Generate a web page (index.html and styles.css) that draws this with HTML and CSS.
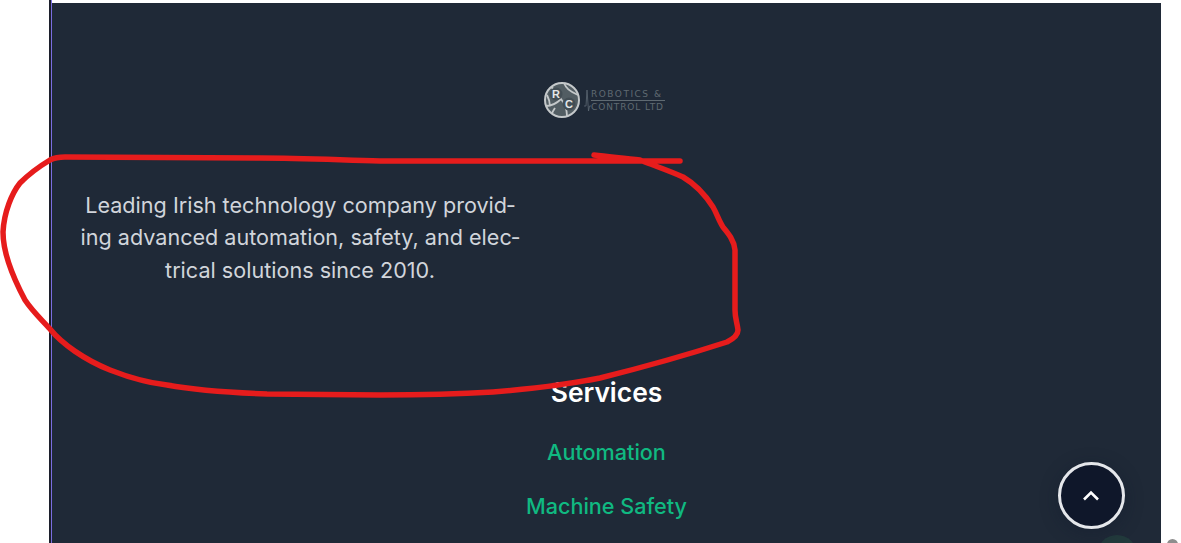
FILE: index.html
```html
<!DOCTYPE html>
<html lang="en">
  <head>
    <meta charset="UTF-8" />
    <meta name="viewport" content="width=device-width, initial-scale=1.0" />
    <title>Robotics &amp; Control Ltd</title>
    <link rel="stylesheet" href="styles.css">
  </head>
  <body>
    <div class="page">
      <footer class="footer">
        <!-- Logo -->
        <div class="logo">
          <svg class="logo-mark" width="38" height="38" viewBox="0 0 38 38">
            <circle cx="19" cy="19" r="17" fill="#525d63" stroke="#c4c8ca" stroke-width="2" />
            <path d="M3 25 C10 25 14 22 18 18 C22 23 24 28 24 35 M21 2 C23 7 26 10 35 14 M8 6 C10 8 12 9 14 9 M12 27 C10 30 9 32 9 33 M4 14 C6 18 7 21 7 25" fill="none" stroke="#c4c8ca" stroke-width="1.800" />
            <circle cx="13" cy="13" r="6.500" fill="#434e55" />
            <circle cx="26" cy="23" r="6.500" fill="#434e55" />
            <text x="13" y="17" class="logo-letter">R</text>
            <text x="26" y="27" class="logo-letter">C</text>
          </svg>
          <svg class="logo-pulse" width="7" height="26" viewBox="0 0 7 26">
            <path d="M0 19 H2 L3 3 L4.500 24 L5.500 19 H7" fill="none" stroke="#5d6873" stroke-width="0.800" />
          </svg>
          <div class="logo-text">
            <span class="logo-line">ROBOTICS &amp;</span>
            <span class="logo-line logo-line-low">CONTROL LTD</span>
          </div>
        </div>

        <p class="about">Leading Irish technology company provid&shy;ing advanced automation, safety, and elec&shy;trical solutions since 2010.</p>

        <div class="services">
          <h3 class="services-title">Services</h3>
          <a class="services-link" href="#">Automation</a>
          <a class="services-link" href="#">Machine Safety</a>
        </div>
      </footer>
    </div>

    <!-- Chat widget peeking out behind the button -->
    <div class="chat-glow"></div>

    <!-- Back to top -->
    <button class="to-top" aria-label="Back to top">
      <svg width="26" height="26" viewBox="0 0 26 26">
        <path d="M5 16.500 L12 9.500 L19 16.500" fill="none" stroke="#fff" stroke-width="2.600" />
      </svg>
    </button>

    <div class="scroll-thumb"></div>

    <!-- Red marker drawn over the screenshot -->
    <svg class="marker" width="1181" height="543" viewBox="0 0 1181 543">
      <path d="M680 161 L380 161 C340 160 300 158 260 158 L65 157 C58 157 54 158 50 160 C40 166 28 175 20 183 C12 193 4 212 3 232 C3 250 9 270 25 300 C33 312 42 320 50 329 C62 344 85 360 110 370 C130 378 150 383 167 385 C200 391 240 393 267 394 L380 395 C420 395 460 394 493 392 C530 389 570 384 600 378 C640 368 690 354 727 342 C733 339 738 335 738 330 C737 322 735 318 735 310 L735 250 C734 240 728 233 723 227 C719 221 717 214 713 207 C706 196 695 184 683 177 C670 171 655 166 640 160 C625 158 610 157 594 155" fill="none" stroke="#e61c1c" stroke-width="5.500" stroke-linecap="round" stroke-linejoin="round" />
    </svg>
  </body>
</html>
```

FILE: styles.css
```css
body {
  margin: 0;
  height: 543px;
  overflow: hidden;
  background: #fff;
  font-family: Inter, "Liberation Sans", sans-serif;
}

/* Dark edge on the left, then the purple line */
.page {
  width: 1112px;
  height: 543px;
  margin-left: 49px;
  padding-top: 3px;
  box-sizing: border-box;
  border-left: 2px solid #1c1f2b;
  box-shadow: inset 1px 0 0 #7a6ee0;
}

.footer {
  height: 540px;
  margin-left: 1px;
  background: #1f2937;
  display: flex;
  flex-direction: column;
  align-items: center;
  overflow: hidden;
}

/* Logo */
.logo {
  display: flex;
  align-items: center;
  height: 38px;
  margin-top: 78px;
  margin-left: -5px;
}

.logo-letter {
  font-family: "Liberation Sans", sans-serif;
  font-size: 11px;
  font-weight: 700;
  fill: #e4e6e8;
  text-anchor: middle;
}

.logo-pulse {
  margin-left: 3px;
}

.logo-text {
  display: flex;
  flex-direction: column;
  width: 74px;
}

.logo-line {
  font-family: "DejaVu Sans", sans-serif;
  font-size: 9px;
  line-height: 12px;
  letter-spacing: 1.500px;
  color: #5f6a72;
  white-space: nowrap;
}

.logo-line-low {
  border-top: 1px solid #5f6a72;
  letter-spacing: 0.900px;
}

/* About text */
.about {
  align-self: flex-start;
  width: 448px;
  margin: 70px 0 0 24px;
  text-align: center;
  font-size: 21.600px;
  line-height: 32.400px;
  color: #d1d5db;
  hyphens: manual;
}

.services {
  display: flex;
  flex-direction: column;
  align-items: center;
  margin-top: 90px;
}

.services-title {
  margin: 0;
  font-size: 26.400px;
  line-height: 32px;
  font-weight: 600;
  color: #fff;
}

.services-link {
  margin-top: 22px;
  font-size: 21.600px;
  line-height: 32px;
  font-weight: 500;
  color: #10b981;
  text-decoration: none;
}

.services-title + .services-link {
  margin-top: 28px;
}

/* Floating button */
.to-top {
  position: fixed;
  left: 1058px;
  top: 462px;
  width: 67px;
  height: 67px;
  padding: 0;
  display: flex;
  align-items: center;
  justify-content: center;
  background: #0f172a;
  border: 3px solid #e5e7eb;
  border-radius: 50%;
  box-shadow: 0 4px 18px rgba(15, 23, 42, 0.35);
}

.chat-glow {
  position: fixed;
  left: 1097px;
  top: 535px;
  width: 40px;
  height: 40px;
  border-radius: 50%;
  background: #223a3c;
}

.scroll-thumb {
  position: fixed;
  left: 1167px;
  top: 539px;
  width: 11px;
  height: 20px;
  border-radius: 6px;
  background: #8d8d8d;
}

.marker {
  position: fixed;
  left: 0;
  top: 0;
  pointer-events: none;
}
```
